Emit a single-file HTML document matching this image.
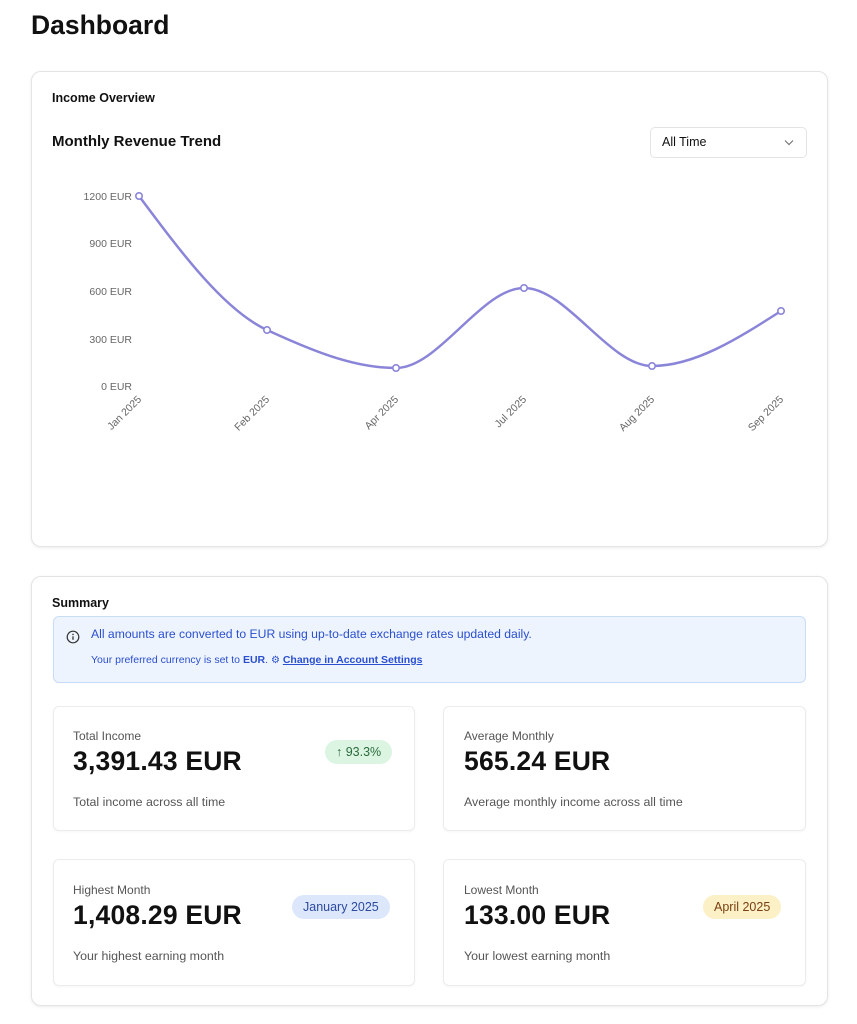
<!DOCTYPE html>
<html><head><meta charset="utf-8"><style>
*{box-sizing:border-box;margin:0;padding:0}
body{width:857px;height:1024px;background:#fff;font-family:"Liberation Sans",sans-serif;color:#111;position:relative;overflow:hidden}
.a{position:absolute;white-space:nowrap}
.card{position:absolute;border:1px solid #e4e4e7;border-radius:10px;background:#fff;box-shadow:0 1px 3px rgba(0,0,0,.08)}
.stat{position:absolute;border:1px solid #ececee;border-radius:6px;background:#fff;box-shadow:0 1px 2px rgba(0,0,0,.04)}
.lbl{font-size:12px;color:#555}
.big{font-size:26.5px;font-weight:bold;color:#111;letter-spacing:.2px}
.sub{font-size:12.4px;color:#555}
.pill{position:absolute;height:24px;line-height:24px;border-radius:12px;font-size:12.5px;padding:0 11px}
</style></head><body>
<div class="a" style="left:31px;top:10px;font-size:26.5px;font-weight:bold;letter-spacing:0">Dashboard</div>

<div class="card" style="left:31px;top:71px;width:797px;height:476px"></div>
<div class="a" style="left:52px;top:91px;font-size:12.5px;font-weight:bold">Income Overview</div>
<div class="a" style="left:52px;top:133px;font-size:15px;font-weight:600">Monthly Revenue Trend</div>
<div class="a" style="left:650px;top:127px;width:157px;height:31px;border:1px solid #e4e4e7;border-radius:5px;font-size:12.5px;line-height:29px;padding-left:11px">All Time
<svg style="position:absolute;right:12px;top:11px" width="10" height="7" viewBox="0 0 10 7"><path d="M1 1.5l4 4 4-4" fill="none" stroke="#777" stroke-width="1.2"/></svg></div>

<svg class="a" style="left:0;top:0" width="857" height="480">
<g font-family="Liberation Sans, sans-serif" font-size="10.5" fill="#666" text-anchor="end">
<text x="132" y="200">1200 EUR</text><text x="132" y="247">900 EUR</text><text x="132" y="295">600 EUR</text><text x="132" y="343">300 EUR</text><text x="132" y="390">0 EUR</text>
<text transform="translate(142,400) rotate(-45)">Jan 2025</text>
<text transform="translate(270,400) rotate(-45)">Feb 2025</text>
<text transform="translate(399,400) rotate(-45)">Apr 2025</text>
<text transform="translate(527,400) rotate(-45)">Jul 2025</text>
<text transform="translate(655,400) rotate(-45)">Aug 2025</text>
<text transform="translate(784,400) rotate(-45)">Sep 2025</text>
</g>
<path d="M139 196C181.7 253.2 224.3 310.4 267 330C310 349.8 353 368 396 368C438.7 368 481.3 288 524 288C566.7 288 609.3 366 652 366C695 366 738 338.5 781 311" fill="none" stroke="#8a85d8" stroke-width="2.5"/>
<g fill="#fff" stroke="#8a85d8" stroke-width="1.6">
<circle cx="139" cy="196" r="3.2"/><circle cx="267" cy="330" r="3.2"/><circle cx="396" cy="368" r="3.2"/><circle cx="524" cy="288" r="3.2"/><circle cx="652" cy="366" r="3.2"/><circle cx="781" cy="311" r="3.2"/></g>
</svg>

<div class="card" style="left:31px;top:576px;width:797px;height:430px"></div>
<div class="a" style="left:52px;top:596px;font-size:12.5px;font-weight:bold">Summary</div>
<div class="a" style="left:53px;top:616px;width:753px;height:67px;background:#eef4fd;border:1px solid #c9dcf6;border-radius:6px"></div>
<svg class="a" style="left:66px;top:630px" width="14" height="14" viewBox="0 0 14 14"><circle cx="7" cy="7" r="5.8" fill="none" stroke="#333" stroke-width="1.2"/><path d="M7 6.3v3.5" stroke="#333" stroke-width="1.3"/><circle cx="7" cy="4.4" r=".8" fill="#333"/></svg>
<div class="a" style="left:91px;top:627px;font-size:12.2px;color:#2a4fd0">All amounts are converted to EUR using up-to-date exchange rates updated daily.</div>
<div class="a" style="left:91px;top:654px;font-size:10.5px;color:#2a4fd0">Your preferred currency is set to <b>EUR</b>. <span style="font-size:10px">⚙</span> <u style="font-weight:600">Change in Account Settings</u></div>

<div class="stat" style="left:53px;top:706px;width:362px;height:125px"></div>
<div class="a lbl" style="left:73px;top:729px">Total Income</div>
<div class="a big" style="left:73px;top:746px">3,391.43 EUR</div>
<div class="a sub" style="left:73px;top:795px">Total income across all time</div>
<div class="pill" style="left:325px;top:740px;background:#dcf5e3;color:#2b6b3c">↑ 93.3%</div>

<div class="stat" style="left:443px;top:706px;width:363px;height:125px"></div>
<div class="a lbl" style="left:464px;top:729px">Average Monthly</div>
<div class="a big" style="left:464px;top:746px">565.24 EUR</div>
<div class="a sub" style="left:464px;top:795px">Average monthly income across all time</div>

<div class="stat" style="left:53px;top:859px;width:362px;height:127px"></div>
<div class="a lbl" style="left:73px;top:883px">Highest Month</div>
<div class="a big" style="left:73px;top:900px">1,408.29 EUR</div>
<div class="a sub" style="left:73px;top:949px">Your highest earning month</div>
<div class="pill" style="left:292px;top:895px;background:#dde7fb;color:#2b4aa0">January 2025</div>

<div class="stat" style="left:443px;top:859px;width:363px;height:127px"></div>
<div class="a lbl" style="left:464px;top:883px">Lowest Month</div>
<div class="a big" style="left:464px;top:900px">133.00 EUR</div>
<div class="a sub" style="left:464px;top:949px">Your lowest earning month</div>
<div class="pill" style="left:703px;top:895px;background:#fbf0c6;color:#7a3f10">April 2025</div>
</body></html>
